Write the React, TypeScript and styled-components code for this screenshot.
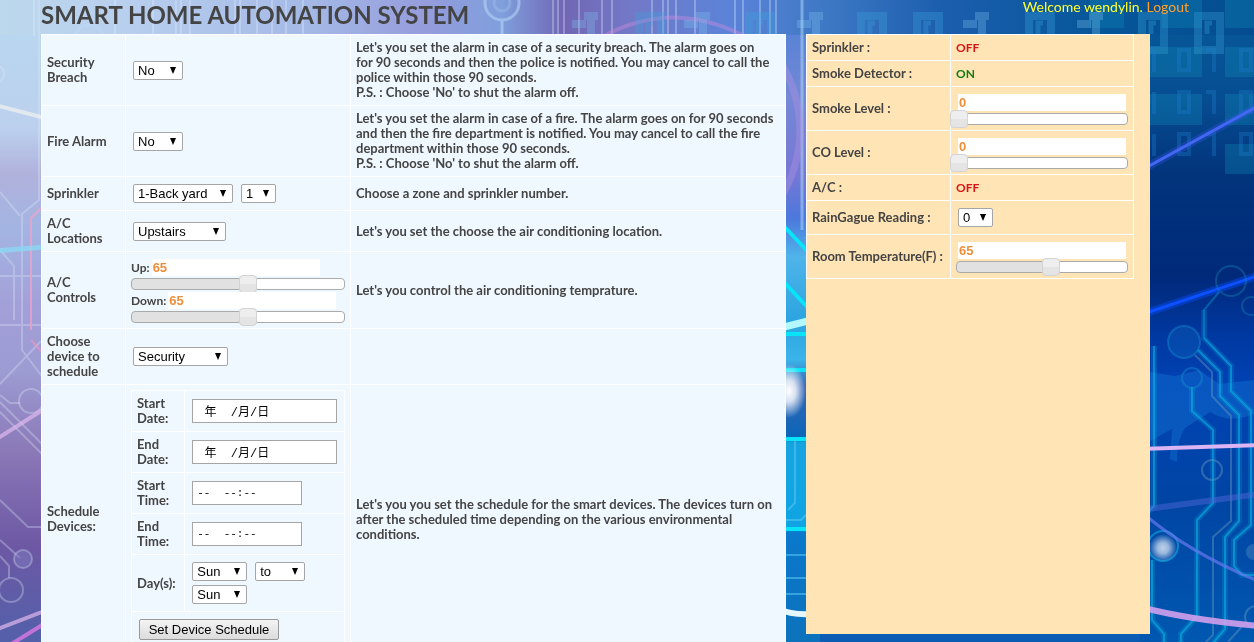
import React, { useId, useState } from 'react';
import styled, { createGlobalStyle } from 'styled-components';

const GlobalStyle = createGlobalStyle`
  html { scrollbar-width: none; }
  body {
    margin: 0;
    background: #0a4fa8;
    color: #444;
    font: bold 13px/15px Lato, "Century Gothic", sans-serif;
  }
  *, *::before, *::after { box-sizing: border-box; }
`;

const Backdrop = styled.svg`
  position: fixed;
  inset: 0;
  width: 100%;
  height: 100%;
  z-index: -1;
`;

const Page = styled.div`
  padding: 0 104px 0 41px;
`;

const Header = styled.header`
  display: flex;
  justify-content: space-between;
  height: 34px;
  margin-right: -39px;
`;

const Title = styled.h1`
  margin: 0;
  font-size: 24px;
  line-height: 30px;
  white-space: nowrap;
`;

const Welcome = styled.p`
  margin: 0;
  color: #ffff33;
  font-size: 14px;
  font-weight: normal;
  line-height: 13px;
  white-space: nowrap;
`;

const LogoutLink = styled.a`
  color: #ffa030;
  text-decoration: none;
`;

const Columns = styled.main`
  display: grid;
  grid-template-columns: 745fr 344fr;
  gap: 20px;
  align-items: start;
`;

const Grid = styled.table<{ $tone?: string }>`
  width: 100%;
  table-layout: fixed;
  border-collapse: collapse;
  background: ${(p) => p.$tone ?? 'transparent'};
`;

const Cell = styled.td`
  padding: 5px;
  border: 1px solid #fff;
  vertical-align: middle;
`;

const HeadCell = styled(Cell).attrs({ as: 'th', scope: 'row' })`
  text-align: left;
`;

const StatusPanel = styled.aside`
  min-height: 600px;
  padding-right: 16px;
  background: #ffe4b5;
`;

const Status = styled.span<{ $on?: boolean }>`
  color: ${(p) => (p.$on ? '#107c10' : '#d81414')};
  font-size: 12px;
`;

const Controls = styled.div`
  display: flex;
  flex-wrap: wrap;
  gap: 0 4px;
`;

const SelectBox = styled.span<{ $width: number }>`
  display: grid;
  width: ${(p) => p.$width}px;
  height: 19px;
  margin: 2px;
  align-items: center;

  &::after {
    content: '';
    grid-area: 1 / 1;
    justify-self: end;
    margin-right: 7px;
    border: solid transparent;
    border-width: 7px 3px 0;
    border-top-color: #000;
    pointer-events: none;
  }
`;

const NativeSelect = styled.select`
  grid-area: 1 / 1;
  width: 100%;
  height: 19px;
  padding: 0 4px;
  appearance: none;
  border: 1px solid #a5a5a5;
  border-radius: 2px;
  background: #fff;
  color: #000;
  font: 13px/17px "Liberation Sans", Arial, sans-serif;
`;

const Field = styled.input<{ $width: number; $size: number }>`
  display: block;
  width: ${(p) => p.$width}px;
  height: 24px;
  margin: 0 2px;
  padding: 2px 4px;
  border: 1px solid #a5a5a5;
  background: #fff;
  color: #000;
  font: ${(p) => p.$size}px "Liberation Mono", "Noto Sans CJK TC", monospace;
  white-space: pre;
`;

const Button = styled.button`
  display: block;
  width: 140px;
  height: 21px;
  margin: 2px;
  padding: 0;
  border: 1px solid #989898;
  border-radius: 2px;
  background: linear-gradient(#f4f4f4, #dcdcdc);
  color: #000;
  font: 13px/17px "Liberation Sans", Arial, sans-serif;
`;

const SliderBlock = styled.div`
  height: 33px;
`;

const Reading = styled.div`
  display: flex;
  align-items: center;
  height: 21px;
  font-size: 12px;
`;

const Amount = styled.input`
  width: 168px;
  height: 17px;
  margin: 0 2px;
  padding: 0 1px;
  border: 0;
  background: #fff;
  color: #ee8f3c;
  font: bold 13px/17px "Liberation Sans", Arial, sans-serif;
`;

const Track = styled.div`
  display: flex;
  align-items: center;
  height: 12px;
  border: 1px solid #aaa;
  border-radius: 4px;
`;

const Range = styled.input`
  flex: none;
  width: calc(100% + 18px);
  height: 18px;
  margin: 0 0 0 -7px;
  appearance: none;
  background: transparent;

  &::-webkit-slider-thumb {
    appearance: none;
    width: 18px;
    height: 18px;
    border: 1px solid #d3d3d3;
    border-radius: 4px;
    background: linear-gradient(#eeeeee 50%, #e4e4e4 50%);
  }
`;

type SelectProps = { label: string; width: number; options: string[] };

function Select({ label, width, options }: SelectProps) {
  return (
    <SelectBox $width={width}>
      <NativeSelect aria-label={label}>
        {options.map((o) => (
          <option key={o}>{o}</option>
        ))}
      </NativeSelect>
    </SelectBox>
  );
}

type SliderProps = { name: string; caption?: string; min: number; max: number; initial: number };

function Slider({ name, caption, min, max, initial }: SliderProps) {
  const [value, setValue] = useState(initial);
  const id = useId();
  const filled = ((value - min) / (max - min)) * 100;
  return (
    <SliderBlock>
      <Reading>
        {caption && <label htmlFor={id}>{caption}</label>}
        <Amount id={id} aria-label={caption ? undefined : name} readOnly value={value} />
      </Reading>
      <Track style={{ background: `linear-gradient(to right, #e1e1e1 ${filled}%, #fff ${filled}%)` }}>
        <Range
          type="range"
          aria-label={`${name} slider`}
          min={min}
          max={max}
          value={value}
          onChange={(e) => setValue(Number(e.target.value))}
        />
      </Track>
    </SliderBlock>
  );
}

const yesNo = ['No', 'Yes'];
const days = ['Sun', 'Mon', 'Tue', 'Wed', 'Thu', 'Fri', 'Sat'];
const dateText = ' 年  /月/日';
const timeText = '--  --:--';

const scheduleFields = [
  { id: 'start-date', lines: ['Start', 'Date:'], width: 145, size: 12, value: dateText },
  { id: 'end-date', lines: ['End', 'Date:'], width: 145, size: 12, value: dateText },
  { id: 'start-time', lines: ['Start', 'Time:'], width: 110, size: 11, value: timeText },
  { id: 'end-time', lines: ['End', 'Time:'], width: 110, size: 11, value: timeText },
];

function ScheduleTable() {
  return (
    <Grid>
      <colgroup>
        <col style={{ width: '25%' }} />
        <col />
      </colgroup>
      <tbody>
        {scheduleFields.map((f) => (
          <tr key={f.id}>
            <HeadCell>
              <label htmlFor={f.id}>
                {f.lines[0]}
                <br />
                {f.lines[1]}
              </label>
            </HeadCell>
            <Cell>
              <Field id={f.id} $width={f.width} $size={f.size} defaultValue={f.value} />
            </Cell>
          </tr>
        ))}
        <tr>
          <HeadCell>Day(s):</HeadCell>
          <Cell>
            <Controls>
              <Select label="First day" width={55} options={days} />
              <Select label="Day range" width={50} options={['to', 'and']} />
              <Select label="Last day" width={55} options={days} />
            </Controls>
          </Cell>
        </tr>
        <tr>
          <Cell colSpan={2}>
            <Button type="button">Set Device Schedule</Button>
          </Cell>
        </tr>
      </tbody>
    </Grid>
  );
}

const controlRows: { name: React.ReactNode; control: React.ReactNode; help: React.ReactNode }[] = [
  {
    name: 'Security Breach',
    control: <Controls><Select label="Security Breach" width={50} options={yesNo} /></Controls>,
    help: (
      <>
        Let's you set the alarm in case of a security breach. The alarm goes on<br />
        for 90 seconds and then the police is notified. You may cancel to call the<br />
        police within those 90 seconds.<br />
        P.S. : Choose 'No' to shut the alarm off.
      </>
    ),
  },
  {
    name: 'Fire Alarm',
    control: <Controls><Select label="Fire Alarm" width={50} options={yesNo} /></Controls>,
    help: (
      <>
        Let's you set the alarm in case of a fire. The alarm goes on for 90 seconds<br />
        and then the fire department is notified. You may cancel to call the fire<br />
        department within those 90 seconds.<br />
        P.S. : Choose 'No' to shut the alarm off.
      </>
    ),
  },
  {
    name: 'Sprinkler',
    control: (
      <Controls>
        <Select label="Zone" width={100} options={['1-Back yard', '2-Front yard']} />
        <Select label="Sprinkler number" width={35} options={['1', '2', '3']} />
      </Controls>
    ),
    help: 'Choose a zone and sprinkler number.',
  },
  {
    name: <>A/C<br />Locations</>,
    control: <Controls><Select label="A/C location" width={93} options={['Upstairs', 'Downstairs']} /></Controls>,
    help: "Let's you set the choose the air conditioning location.",
  },
  {
    name: <>A/C<br />Controls</>,
    control: (
      <>
        <Slider name="Up" caption="Up:" min={30} max={95} initial={65} />
        <Slider name="Down" caption="Down:" min={30} max={95} initial={65} />
      </>
    ),
    help: "Let's you control the air conditioning temprature.",
  },
  {
    name: <>Choose<br />device to<br />schedule</>,
    control: <Controls><Select label="Device to schedule" width={95} options={['Security', 'Sprinkler', 'A/C']} /></Controls>,
    help: null,
  },
  {
    name: <>Schedule<br />Devices:</>,
    control: <ScheduleTable />,
    help: (
      <>
        Let's you you set the schedule for the smart devices. The devices turn on<br />
        after the scheduled time depending on the various environmental<br />
        conditions.
      </>
    ),
  },
];

const statusRows: { name: string; value: React.ReactNode }[] = [
  { name: 'Sprinkler :', value: <Status>OFF</Status> },
  { name: 'Smoke Detector :', value: <Status $on>ON</Status> },
  { name: 'Smoke Level :', value: <Slider name="Smoke Level" min={0} max={100} initial={0} /> },
  { name: 'CO Level :', value: <Slider name="CO Level" min={0} max={100} initial={0} /> },
  { name: 'A/C :', value: <Status>OFF</Status> },
  {
    name: 'RainGague Reading :',
    value: <Controls><Select label="RainGague Reading" width={35} options={['0', '1', '2']} /></Controls>,
  },
  { name: 'Room Temperature(F) :', value: <Slider name="Room Temperature" min={30} max={95} initial={65} /> },
];

const zeros = [635, 745, 857, 913, 1025, 1138, 1194];
const ones = [572, 684, 797, 963, 1077];
const bars = [34, 115, 153, 176, 181, 190, 235, 240, 257, 272, 286, 303, 553, 558, 564, 579, 602, 612, 652, 663, 668, 676, 695, 735, 743, 760, 770, 776];

function Circuitry() {
  return (
    <Backdrop viewBox="0 0 1254 642" preserveAspectRatio="xMidYMid slice" aria-hidden="true">
      <defs>
        <linearGradient id="top">
          <stop offset="0" stopColor="#bcd8ec" />
          <stop offset=".1" stopColor="#b9cfee" />
          <stop offset=".25" stopColor="#a4b8e6" />
          <stop offset=".34" stopColor="#959cdc" />
          <stop offset=".4" stopColor="#7f9fdc" />
          <stop offset=".45" stopColor="#7166b4" />
          <stop offset=".5" stopColor="#7378c6" />
          <stop offset=".58" stopColor="#5c83d8" />
          <stop offset=".66" stopColor="#3d78c4" />
          <stop offset=".75" stopColor="#1c5eae" />
          <stop offset=".88" stopColor="#055699" />
          <stop offset="1" stopColor="#044c90" />
        </linearGradient>
        <linearGradient id="left" x2="0" y2="1">
          <stop offset="0" stopColor="#b8d8f0" />
          <stop offset=".2" stopColor="#bcd0ee" />
          <stop offset=".27" stopColor="#b0b2dc" />
          <stop offset=".36" stopColor="#a3b4e2" />
          <stop offset=".48" stopColor="#a39fd8" />
          <stop offset=".58" stopColor="#9c9bd2" />
          <stop offset=".7" stopColor="#8b79b8" />
          <stop offset=".85" stopColor="#6d58a4" />
          <stop offset="1" stopColor="#5360aa" />
        </linearGradient>
        <linearGradient id="middle" x2="0" y2="1">
          <stop offset="0" stopColor="#4a80d4" />
          <stop offset=".15" stopColor="#7488d6" />
          <stop offset=".27" stopColor="#7778d4" />
          <stop offset=".34" stopColor="#4c78dc" />
          <stop offset=".4" stopColor="#4fb4ea" />
          <stop offset=".5" stopColor="#2ba4e0" />
          <stop offset=".56" stopColor="#3bb4ea" />
          <stop offset=".6" stopColor="#3a66b4" />
          <stop offset=".68" stopColor="#0b66b8" />
          <stop offset=".69" stopColor="#16a4e0" />
          <stop offset=".82" stopColor="#10a4e4" />
          <stop offset=".83" stopColor="#0a78cc" />
          <stop offset="1" stopColor="#0c72bc" />
        </linearGradient>
        <linearGradient id="right" x2="0" y2="1">
          <stop offset="0" stopColor="#065a98" />
          <stop offset=".15" stopColor="#064e92" />
          <stop offset=".27" stopColor="#02347c" />
          <stop offset=".43" stopColor="#00297a" />
          <stop offset=".52" stopColor="#0038a0" />
          <stop offset=".6" stopColor="#0042b4" />
          <stop offset=".78" stopColor="#0045a4" />
          <stop offset="1" stopColor="#0058b0" />
        </linearGradient>
        <radialGradient id="glow">
          <stop offset="0" stopColor="#fff" />
          <stop offset=".4" stopColor="#fff" stopOpacity=".8" />
          <stop offset="1" stopColor="#fff" stopOpacity="0" />
        </radialGradient>
      </defs>
      <rect width="1254" height="642" fill="#0a5cb4" />
      <rect width="60" height="642" fill="url(#left)" />
      <rect x="770" width="50" height="642" fill="url(#middle)" />
      <rect x="1140" width="114" height="642" fill="url(#right)" />
      <rect width="1254" height="35" fill="url(#top)" />

      {/* hairlines behind the title */}
      <path d={bars.map((x) => `M${x} 0V36`).join('')} stroke="#dff0ff" strokeOpacity=".32" strokeWidth="2" />
      <g fill="none" stroke="#b8d8f8" strokeOpacity=".55" strokeWidth="3">
        <circle cx="502" cy="3" r="17" />
        <circle cx="502" cy="3" r="8" strokeOpacity=".25" />
        <path d="M502 21V36" />
        <circle cx="89" cy="40" r="15" />
      </g>
      <path d="M604 36Q680 -5 760 45" fill="none" stroke="#d28be0" strokeOpacity=".4" strokeWidth="4" />

      {/* binary blocks */}
      <g fill="#108bb8" fillOpacity=".32">
        <path d="M1090 0h34v28h-34zM1162 0h40v28h-40zM1225 0h29v28h-29zM1150 47h52v30h-52zM1225 47h29v30h-29zM1150 94h52v31h-52zM1225 94h29v31h-29zM1225 144h29v30h-29z" />
      </g>
      <g fill="none" stroke="#3aa4dc" strokeOpacity=".32">
        <path strokeWidth="8" d={zeros.map((x) => `M${x + 4} 50V16H${x + 26}V50Z`).join('')} />
        <path strokeWidth="5" d={zeros.map((x) => `M${x + 18} 23H${x + 13}V34`).join('')} />
        <path strokeWidth="8" stroke="#7cc0f0" d={ones.map((x) => `M${x} 24h14M${x + 12} 16h14M${x + 19} 20v18`).join('')} />
      </g>
      <g fill="none" stroke="#1f7fd0" strokeOpacity=".32" strokeWidth="4">
        {[50, 92, 134].map((y) => (
          <path key={y} d={`M1179 ${y}v20h10v-20zM1206 ${y}h8v22M1241 ${y}v20h10v-20zM1154 ${y}v22`} />
        ))}
      </g>

      {/* left edge */}
      <g fill="none" stroke="#dce8fa" strokeOpacity=".32" strokeWidth="2">
        <path d="M39 0V200L22 214V350L60 400M31 330V218L60 190M0 250l14 16v54M0 395l10 8h10M0 402l60 60M0 412l60 60M0 500l28 27h20M0 540l20 18M0 556l9 10v12M0 384l41 -43M0 325h41M0 276h41M0 192l20 24" />
        <circle cx="31" cy="401" r="12" />
        <circle cx="11" cy="590" r="12" />
        <circle cx="23" cy="559" r="9" fill="#7e7cc0" fillOpacity=".5" />
        <circle cx="-6" cy="74" r="10" />
        <path d="M31 330V218L60 190M31 340l20 22" stroke="#ff90b8" strokeOpacity=".55" />
      </g>
      <path d="M-5 105L60 122" stroke="#f6f4ee" strokeOpacity=".65" strokeWidth="4" />
      <path d="M-5 251L60 246" stroke="#86e0f8" strokeOpacity=".65" strokeWidth="5" />
      <path d="M-5 440L60 399M-5 630L60 605" stroke="#e0b8ee" strokeOpacity=".7" strokeWidth="4" />
      <path d="M5 648L60 614" stroke="#dd78e4" strokeOpacity=".8" strokeWidth="4" />

      {/* gap between the panels */}
      <path d="M802 0V230" stroke="#b4dcfa" strokeOpacity=".5" strokeWidth="3" />
      <path d="M780 60Q820 130 780 200" fill="none" stroke="#b090e0" strokeOpacity=".4" strokeWidth="7" />
      <path d="M780 222L812 256M780 278L812 312M780 334H812M780 370H812M780 439H812M780 529H812" stroke="#08e4f8" strokeWidth="4" />
      <path d="M780 328L812 320" stroke="#b4f8ff" strokeWidth="7" />
      <ellipse cx="789" cy="391" rx="17" ry="27" fill="url(#glow)" />
      <path d="M795 440v63l-7 7M786 520h15l7-7M786 555h22M786 578h22M786 594h22" fill="none" stroke="#5ac8f4" strokeOpacity=".55" strokeWidth="2" />
      <path d="M780 609Q790 615 812 614" fill="none" stroke="#e6f6ff" strokeWidth="6" />

      {/* right edge */}
      <path d="M1150 372l25 4 24-6 20 14 35 -4v34q-25 10-44-2l-25 16q-8 12-8 34l-7-3 2-30-22 12z" fill="#1478d4" fillOpacity=".4" />
      <path d="M1140 171L1260 105" stroke="#3658f0" strokeOpacity=".3" strokeWidth="8" />
      <path d="M1140 171L1260 105" stroke="#4466f4" strokeWidth="3" />
      <path d="M1140 315L1260 275" stroke="#0850ff" strokeOpacity=".4" strokeWidth="8" />
      <path d="M1140 315L1260 275" stroke="#0c50ff" strokeWidth="3" />
      <g fill="none" stroke="#00b4e4" strokeOpacity=".2" strokeWidth="6">
        <path d="M1154 346V506l-6 6M1192 387v24l21 19v73l-16 17v96l-16 18v8M1204 310v28l27 28v25l20 20v114l-17 15v26l8 9h14M1198 350l22 22v24l19 19v106l-14 16v92l-12 14M1152 560v60l12 14v8" />
      </g>
      <g fill="none" stroke="#0eb6e4" strokeOpacity=".55" strokeWidth="2">
        <path d="M1154 346V506l-6 6M1192 387v24l21 19v73l-16 17v96l-16 18v8M1204 338l27 28v25l20 20v114l-17 15v26l8 9h14M1198 350l22 22v24l19 19v106l-14 16v92l-12 14M1152 560v60l12 14v8" />
        <path d="M1219 292l-15 18v28" strokeOpacity=".35" />
        <circle cx="1163" cy="546" r="15" />
      </g>
      <g fill="none" stroke="#6c9cc0" strokeOpacity=".42" strokeWidth="2">
        <path d="M1195 355l17 17v24l19 20v105l-18 16v98l-12 12M1246 622l-18 20" />
        <circle cx="1231" cy="281" r="15" stroke="#1684b0" />
        <circle cx="1251" cy="306" r="9" stroke="#1684b0" />
        <circle cx="1184" cy="342" r="16" stroke="#1690d0" fill="#1478c8" fillOpacity=".25" />
        <circle cx="1192" cy="378" r="10" stroke="#1690d0" />
        <circle cx="1212" cy="470" r="10" />
        <circle cx="1256" cy="617" r="11" />
        <circle cx="1254" cy="552" r="8" fill="#3a78b8" fillOpacity=".6" stroke="none" />
      </g>
      <circle cx="1163" cy="548" r="14" fill="url(#glow)" fillOpacity=".75" />
      <path d="M1140 510L1260 494" stroke="#5468dc" strokeOpacity=".45" strokeWidth="6" />
      <path d="M1145 515Q1190 553 1260 582" fill="none" stroke="#6678f0" strokeOpacity=".7" strokeWidth="3" />
      <path d="M1140 449L1260 445" stroke="#dcb4f4" strokeWidth="4" />
      <path d="M1140 607Q1190 620 1260 626" fill="none" stroke="#d0a0ec" strokeOpacity=".9" strokeWidth="6" />
    </Backdrop>
  );
}

export default function App() {
  return (
    <>
      <GlobalStyle />
      <Circuitry />
      <Page>
        <Header>
          <Title>SMART HOME AUTOMATION SYSTEM</Title>
          <Welcome>
            Welcome wendylin. <LogoutLink href="#logout">Logout</LogoutLink>
          </Welcome>
        </Header>
        <Columns>
          <Grid $tone="#f0f8ff">
            <colgroup>
              <col style={{ width: '84px' }} />
              <col style={{ width: '225px' }} />
              <col />
            </colgroup>
            <tbody>
              {controlRows.map((row, i) => (
                <tr key={i}>
                  <HeadCell>{row.name}</HeadCell>
                  <Cell>{row.control}</Cell>
                  <Cell>{row.help}</Cell>
                </tr>
              ))}
            </tbody>
          </Grid>
          <StatusPanel>
            <Grid>
              <colgroup>
                <col style={{ width: '144px' }} />
                <col />
              </colgroup>
              <tbody>
                {statusRows.map((row) => (
                  <tr key={row.name}>
                    <HeadCell>{row.name}</HeadCell>
                    <Cell>{row.value}</Cell>
                  </tr>
                ))}
              </tbody>
            </Grid>
          </StatusPanel>
        </Columns>
      </Page>
    </>
  );
}
